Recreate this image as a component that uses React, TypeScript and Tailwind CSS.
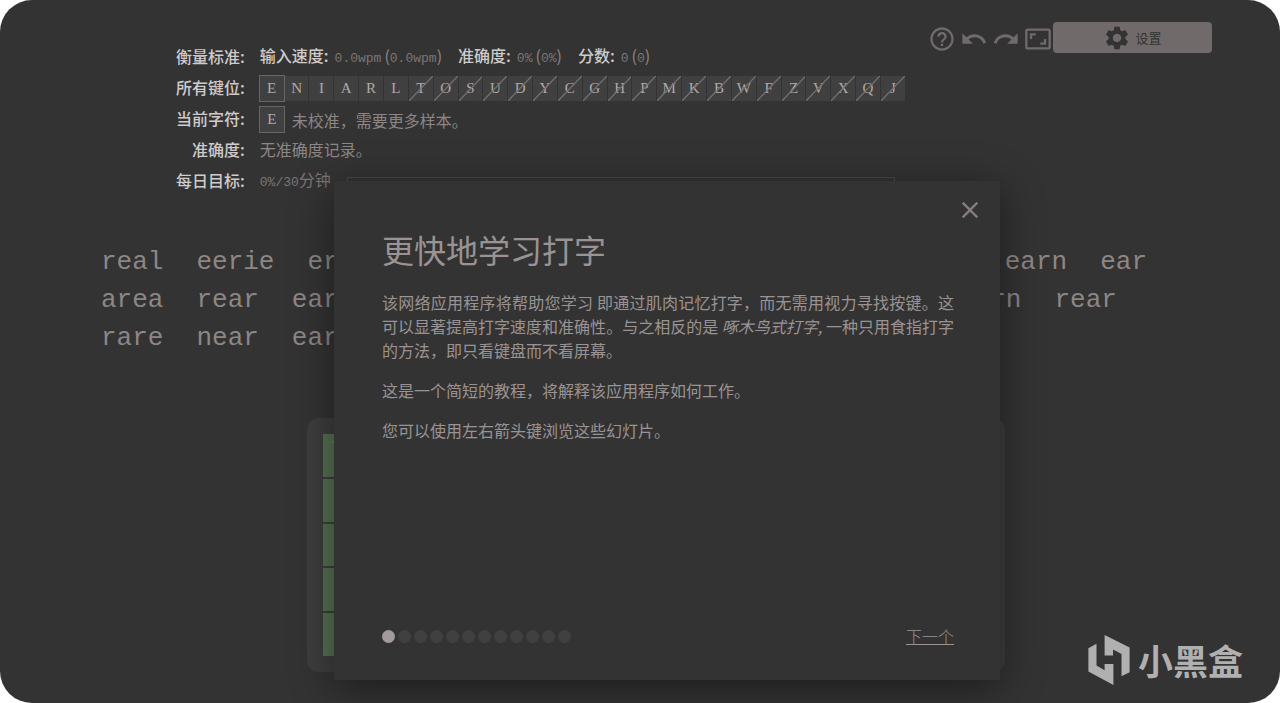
import { MdAspectRatio, MdClose, MdHelpOutline, MdRedo, MdSettings, MdUndo } from 'react-icons/md';
import type { IconType } from 'react-icons';

const letters = 'ENIARLTOSUDYCGHPMKBWFZVXQJ'.split('');
const unlocked = 6;

const lines = [
  { start: ['real', 'eerie', 'era'], end: ['earn', 'ear'], align: 'justify-end' },
  { start: ['area', 'rear', 'ear'], end: ['earn', 'rear'], align: 'justify-start' },
  { start: ['rare', 'near', 'ear'], end: [], align: 'justify-start' },
];

const keyRows = [
  { label: '~', count: 14 },
  { label: '', count: 14 },
  { label: '', count: 13 },
  { label: '', count: 12 },
  { label: '', count: 8 },
];

const tools: { label: string; icon: IconType }[] = [
  { label: '帮助', icon: MdHelpOutline },
  { label: '撤消', icon: MdUndo },
  { label: '重做', icon: MdRedo },
  { label: '全屏', icon: MdAspectRatio },
];

const slides = Array.from({ length: 12 }, (_, i) => i);

function Value({ children }: { children: React.ReactNode }) {
  return <span className="font-['Liberation_Mono',monospace] text-[13px] text-[#7d7575]">{children}</span>;
}

function Stat({ name, value }: { name: string; value: string }) {
  return (
    <span className="flex items-baseline">
      <span className="mr-1.5 font-medium text-[#cfcbcb]">{name}:</span>
      <Value>{value}</Value>
      <span className="ml-[3px]">
        (<Value>{value}</Value>)
      </span>
    </span>
  );
}

function LetterKey({ letter, active, locked }: { letter: string; active?: boolean; locked?: boolean }) {
  return (
    <span
      className={`relative flex h-[25px] items-center justify-center bg-[#404040] font-['Liberation_Serif',serif] text-[15px] text-[#b0a9a9] ${
        active ? 'outline outline-[#6a6565]' : ''
      }`}
    >
      {letter}
      {locked && (
        <svg className="absolute inset-0 h-full w-full" viewBox="0 0 24 24" preserveAspectRatio="none">
          <path d="M0 24L24 0" stroke="#777070" strokeWidth="1.2" />
        </svg>
      )}
    </span>
  );
}

function Metrics() {
  return (
    <dl className="grid auto-rows-[31px] grid-cols-[auto_1fr] items-center gap-x-[15px] text-base text-[#8d8686] [&>dt]:text-right [&>dt]:font-medium [&>dt]:text-[#cfcbcb]">
      <dt>衡量标准:</dt>
      <dd className="flex gap-4">
        <Stat name="输入速度" value="0.0wpm" />
        <Stat name="准确度" value="0%" />
        <Stat name="分数" value="0" />
      </dd>
      <dt>所有键位:</dt>
      <dd className="grid w-[645px] auto-cols-fr grid-flow-col gap-px pt-1">
        {letters.map((letter, i) => (
          <LetterKey key={letter} letter={letter} active={i === 0} locked={i >= unlocked} />
        ))}
      </dd>
      <dt>当前字符:</dt>
      <dd className="grid grid-cols-[24px_1fr] items-center gap-2 pt-1">
        <LetterKey letter="E" active />
        <span>未校准，需要更多样本。</span>
      </dd>
      <dt>准确度:</dt>
      <dd>无准确度记录。</dd>
      <dt>每日目标:</dt>
      <dd className="flex items-center gap-4 text-[#7d7575]">
        <span>
          <Value>0%/30</Value>分钟
        </span>
        <span className="h-1.5 w-[548px] border border-[#484848]" />
      </dd>
    </dl>
  );
}

function Toolbar() {
  return (
    <div className="flex items-start text-[#716a6a]">
      <div className="flex gap-1 pt-[3px]">
        {tools.map(({ label, icon: Icon }) => (
          <button key={label} type="button" aria-label={label}>
            <Icon className="h-7 w-7" />
          </button>
        ))}
      </div>
      <button
        type="button"
        className="ml-px flex h-[31px] w-[159px] items-center justify-center gap-1 rounded-[4px] bg-[#716a6a] text-[13px] text-[#333333]"
      >
        <MdSettings className="h-7 w-7" />
        设置
      </button>
    </div>
  );
}

function Keyboard() {
  return (
    <div className="mx-auto grid h-[254px] w-[698px] grid-rows-5 gap-[2px] rounded-xl bg-[#3e3e3e] p-4">
      {keyRows.map(({ label, count }, r) => (
        <div key={r} className="flex gap-[2px]">
          {Array.from({ length: count }, (_, k) => (
            <div key={k} className={`flex-1 px-2 text-xs text-[#8d8686] ${k < 2 ? 'bg-[#567052]' : 'bg-[#4a4a4a]'}`}>
              {k === 0 && label}
            </div>
          ))}
        </div>
      ))}
    </div>
  );
}

function Tour() {
  return (
    <section
      role="dialog"
      aria-labelledby="tour-title"
      className="relative flex min-h-[499px] w-[666px] flex-col bg-[#333333] pt-12 pr-[46px] pb-8 pl-12 text-[#9b9393] shadow-[0_8px_40px_rgba(0,0,0,0.45)]"
    >
      <button type="button" aria-label="关闭" className="absolute top-[15px] right-4 text-[#857d7d]">
        <MdClose className="h-7 w-7" />
      </button>
      <h1 id="tour-title" className="text-[32px] leading-10">
        更快地学习打字
      </h1>
      <div className="mt-[21px] flex flex-col gap-4 text-justify text-base leading-6">
        <p>
          该网络应用程序将帮助您学习 即通过肌肉记忆打字，而无需用视力寻找按键。这可以显著提高打字速度和准确性。与之相反的是{' '}
          <em>啄木鸟式打字,</em> 一种只用食指打字的方法，即只看键盘而不看屏幕。
        </p>
        <p>这是一个简短的教程，将解释该应用程序如何工作。</p>
        <p>您可以使用左右箭头键浏览这些幻灯片。</p>
      </div>
      <footer className="mt-auto flex items-center justify-between">
        <div className="flex gap-[3px]">
          {slides.map((i) => (
            <button
              key={i}
              type="button"
              aria-label={`${i + 1}`}
              className={`h-[13px] w-[13px] rounded-full ${i === 0 ? 'bg-[#a39b9b]' : 'bg-[#404040]'}`}
            />
          ))}
        </div>
        <a href="#next" className="text-base font-light underline underline-offset-1">
          下一个
        </a>
      </footer>
    </section>
  );
}

function Watermark() {
  return (
    <div className="absolute right-[37px] bottom-[18px] flex items-center gap-2 text-[#b0b0b0]">
      <svg className="h-[50px] w-[42px]" viewBox="0 0 122 148" fill="currentColor">
        <path d="M0 39L24 26V90L48 104V86H74V148L0 108Z" />
        <path d="M48 0L122 37V110L98 122V56L73 43V61H48Z" />
      </svg>
      <span className="text-[35px] leading-[50px] font-bold">小黑盒</span>
    </div>
  );
}

export default function App() {
  return (
    <div className="relative min-h-screen overflow-hidden rounded-[32px] bg-[#333333] pb-[31px] font-['Noto_Sans_CJK_SC',sans-serif]">
      <header className="flex items-start justify-between pt-[22px] pr-[68px] pl-44">
        <div className="-mr-40 pt-[18px]">
          <Metrics />
        </div>
        <Toolbar />
      </header>
      <main>
        <div className="mt-12 flex flex-col pr-[133px] pl-[101px] font-['Liberation_Mono',monospace] text-[26px] leading-[38px] text-[#8d8686]">
          {lines.map(({ start, end, align }, i) => (
            <div key={i} className="flex justify-between">
              <div className="flex gap-[33px]">
                {start.map((word) => (
                  <span key={word}>{word}</span>
                ))}
              </div>
              <div className={`flex w-[188px] gap-[33px] ${align}`}>
                {end.map((word) => (
                  <span key={word}>{word}</span>
                ))}
              </div>
            </div>
          ))}
        </div>
        <div className="mt-[61px] pl-8">
          <Keyboard />
        </div>
      </main>
      <div className="absolute inset-0 flex items-start justify-center pt-[181px] pl-[54px]">
        <Tour />
      </div>
      <Watermark />
    </div>
  );
}
